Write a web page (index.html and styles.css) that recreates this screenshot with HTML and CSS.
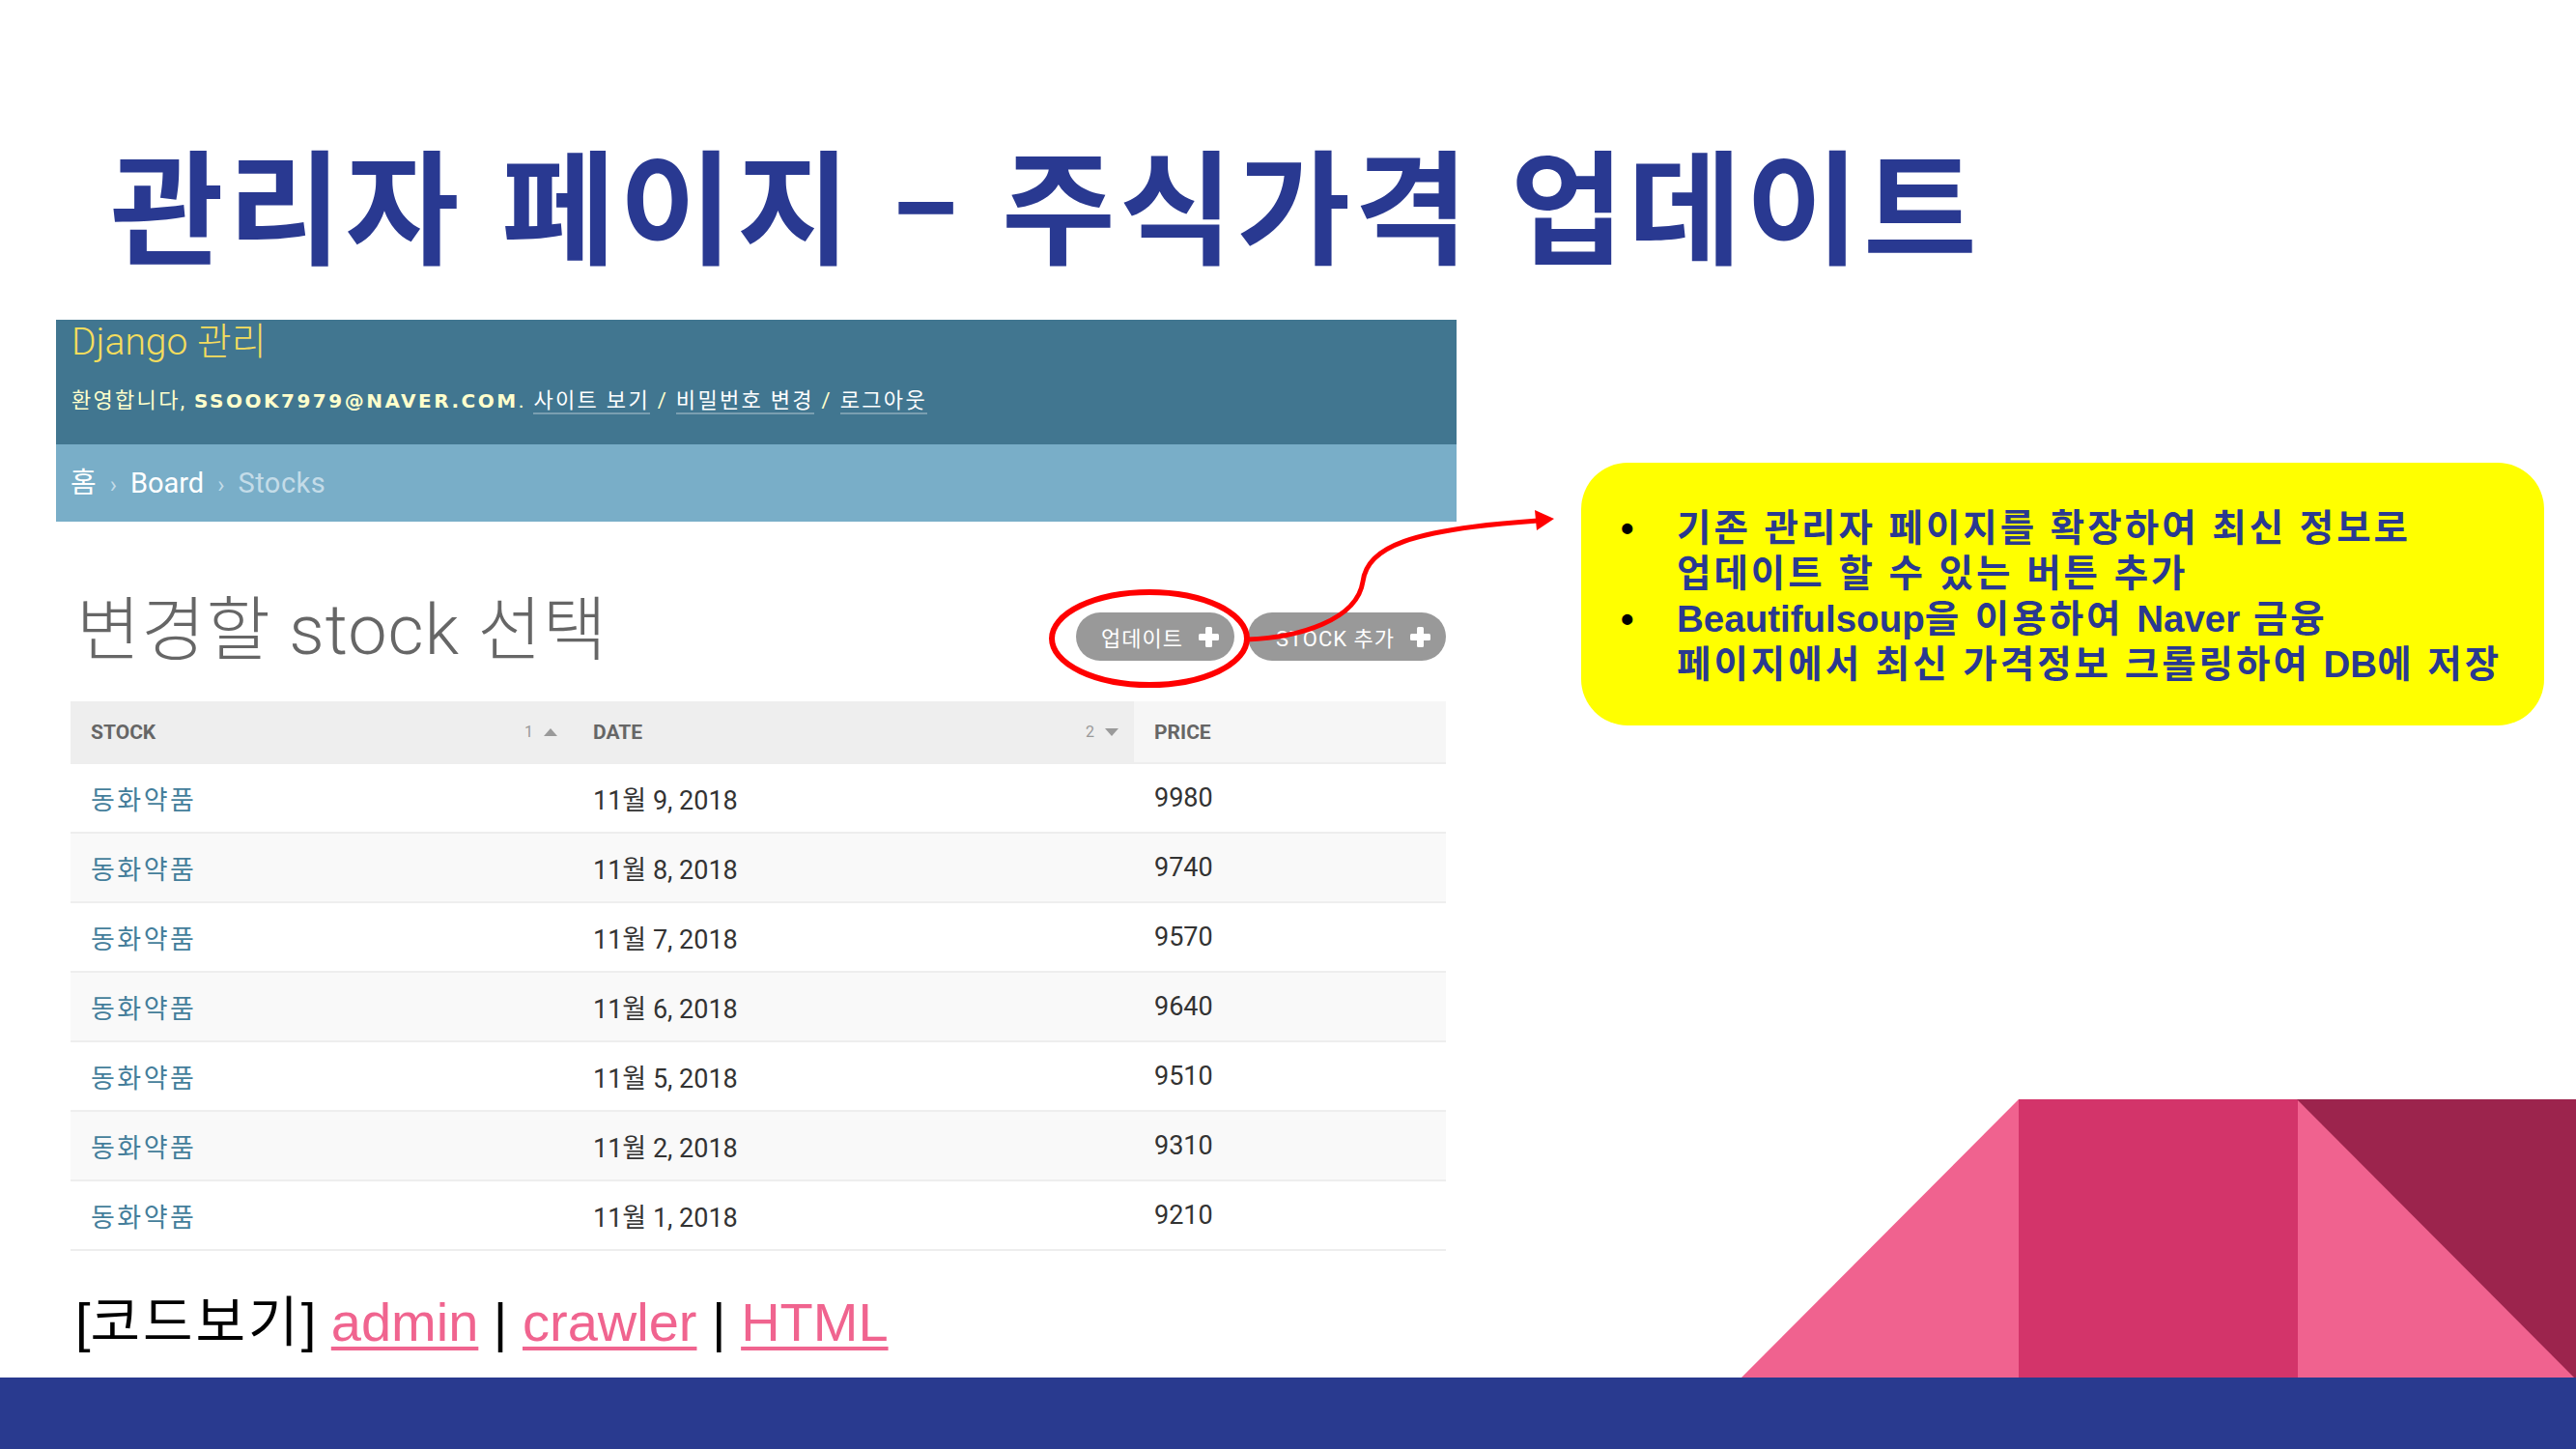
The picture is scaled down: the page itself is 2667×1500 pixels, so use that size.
FILE: index.html
```html
<!DOCTYPE html>
<html lang="ko">
<head>
<meta charset="utf-8">
<title>관리자 페이지 – 주식가격 업데이트</title>
<link rel="stylesheet" href="styles.css">
</head>
<body>
<div class="slide">
  <h1 class="slide-title">관리자 페이지 – 주식가격 업데이트</h1>

  <div class="main-row">
    <div class="admin">
      <div class="admin-header">
        <div class="site-name">Django 관리</div>
        <div class="user-tools">환영합니다, <strong>ssook7979@naver.com</strong>. <a href="#">사이트 보기</a> / <a href="#">비밀번호 변경</a> / <a href="#">로그아웃</a></div>
      </div>
      <div class="breadcrumbs"><a href="#">홈</a><span class="sep">›</span><a href="#">Board</a><span class="sep">›</span><span class="current">Stocks</span></div>
      <div class="content">
        <div class="content-head">
          <h2 class="page-heading">변경할 stock 선택</h2>
          <div class="object-tools">
            <a class="tool-btn tool-btn-first" href="#">업데이트 <svg class="plus" viewBox="0 0 21 21"><rect x="7" y="0" width="7" height="21" rx="1.5"/><rect x="0" y="7" width="21" height="7" rx="1.5"/></svg></a>
            <a class="tool-btn tool-btn-second" href="#">Stock 추가 <svg class="plus" viewBox="0 0 21 21"><rect x="7" y="0" width="7" height="21" rx="1.5"/><rect x="0" y="7" width="21" height="7" rx="1.5"/></svg></a>
          </div>
        </div>
        <table class="result-list">
          <thead>
            <tr>
              <th class="col-stock sorted"><div class="th-inner"><span>Stock</span><span class="sort"><span class="sort-num">1</span><span class="tri-up"></span></span></div></th>
              <th class="col-date sorted"><div class="th-inner"><span>Date</span><span class="sort"><span class="sort-num">2</span><span class="tri-down"></span></span></div></th>
              <th class="col-price"><div class="th-inner"><span>Price</span></div></th>
            </tr>
          </thead>
          <tbody>
            <tr><td><a href="#">동화약품</a></td><td>11월 9, 2018</td><td>9980</td></tr>
            <tr><td><a href="#">동화약품</a></td><td>11월 8, 2018</td><td>9740</td></tr>
            <tr><td><a href="#">동화약품</a></td><td>11월 7, 2018</td><td>9570</td></tr>
            <tr><td><a href="#">동화약품</a></td><td>11월 6, 2018</td><td>9640</td></tr>
            <tr><td><a href="#">동화약품</a></td><td>11월 5, 2018</td><td>9510</td></tr>
            <tr><td><a href="#">동화약품</a></td><td>11월 2, 2018</td><td>9310</td></tr>
            <tr><td><a href="#">동화약품</a></td><td>11월 1, 2018</td><td>9210</td></tr>
          </tbody>
        </table>
      </div>
    </div>

    <div class="callout">
      <ul class="callout-list">
        <li><span class="bullet">•</span><span class="callout-text">기존 관리자 페이지를 확장하여 최신 정보로<br>업데이트 할 수 있는 버튼 추가</span></li>
        <li><span class="bullet">•</span><span class="callout-text"><span class="latin">Beautifulsoup</span>을 이용하여 <span class="latin">Naver</span> 금융<br>페이지에서 최신 가격정보 크롤링하여 <span class="latin">DB</span>에 저장</span></li>
      </ul>
    </div>
  </div>

  <p class="code-links">[<span class="ko">코드보기</span>] <a href="#">admin</a> | <a href="#">crawler</a> | <a href="#">HTML</a></p>

  <div class="footer-bar"></div>

  <svg class="decor" viewBox="0 0 864 288" width="864" height="288">
    <polygon points="287,0 0,288 288,288" fill="#f0628f"/>
    <rect x="287" y="0" width="290" height="288" fill="#d3346a"/>
    <polygon points="576,0 863,288 576,288" fill="#f0628f"/>
    <polygon points="575,0 864,0 864,288 862,288" fill="#9c244d"/>
  </svg>

  <svg class="annotation" viewBox="0 0 2667 1500" width="2667" height="1500">
    <ellipse cx="1190" cy="661" rx="101" ry="48" fill="none" stroke="#ff0000" stroke-width="6"/>
    <path d="M1291,662 C1345,660 1405,642 1411,602 C1416,566 1460,548 1592,539" fill="none" stroke="#ff0000" stroke-width="5"/>
    <polygon points="1609,537 1589,528 1591,549" fill="#ff0000"/>
  </svg>
</div>
</body>
</html>
```

FILE: styles.css
```css
html, body {
  margin: 0;
  padding: 0;
  background: #ffffff;
}

.slide {
  position: relative;
  width: 2667px;
  height: 1500px;
  overflow: hidden;
  background: #ffffff;
  display: flex;
  flex-direction: column;
}

.slide-title {
  margin: 0;
  padding: 145px 0 0 114px;
  height: 331px;
  flex: none;
  box-sizing: border-box;
  font-family: "Noto Sans CJK KR", sans-serif;
  font-weight: 700;
  font-size: 128px;
  line-height: 128px;
  letter-spacing: 4px;
  color: #293991;
  white-space: nowrap;
}

.main-row {
  display: flex;
  align-items: flex-start;
  padding-left: 58px;
}

/* Django admin panel */
.admin {
  width: 1450px;
  flex: none;
  font-family: Roboto, "Noto Sans CJK KR", sans-serif;
}

.admin-header {
  background: #417690;
  height: 129px;
  box-sizing: border-box;
  padding: 0 0 0 16px;
}

.site-name {
  font-weight: 300;
  font-size: 39px;
  line-height: 46px;
  color: #f5dd5d;
  height: 46px;
  margin-bottom: 23px;
}

.user-tools {
  font-size: 22px;
  line-height: 30px;
  letter-spacing: 2.3px;
  color: #ffffcc;
  white-space: nowrap;
}

.user-tools strong {
  font-family: "DejaVu Sans", sans-serif;
  font-weight: 700;
  font-size: 20px;
  text-transform: uppercase;
  letter-spacing: 2.5px;
}

.user-tools a {
  color: #ffffff;
  text-decoration: none;
  border-bottom: 2px solid rgba(255, 255, 255, 0.3);
}

.breadcrumbs {
  background: #79aec8;
  height: 80px;
  line-height: 80px;
  padding-left: 15px;
  font-size: 29px;
  color: #c4dce8;
  white-space: nowrap;
}

.breadcrumbs a {
  color: #ffffff;
  text-decoration: none;
}

.breadcrumbs .sep {
  display: inline-block;
  margin: 0 14px;
  font-size: 24px;
  color: #c4dce8;
}

.current {
  letter-spacing: 0.5px;
}

.content {
  padding: 72px 11px 0 15px;
}

.content-head {
  display: flex;
  justify-content: space-between;
  align-items: flex-start;
  height: 114px;
}

.page-heading {
  margin: 0 0 0 6px;
  font-family: Roboto, "Noto Sans CJK KR", sans-serif;
  font-weight: 300;
  font-size: 72px;
  line-height: 82px;
  letter-spacing: 1px;
  color: #666666;
  white-space: nowrap;
}

.object-tools {
  display: flex;
  gap: 14px;
  margin-top: 22px;
}

.tool-btn {
  display: flex;
  align-items: center;
  gap: 16px;
  height: 50px;
  padding: 0 16px 0 24px;
  border-radius: 25px;
  background: #999999;
  color: #ffffff;
  text-decoration: none;
  font-size: 22px;
  letter-spacing: 1px;
  text-transform: uppercase;
  white-space: nowrap;
}

.tool-btn-first {
  padding-left: 26px;
}

.tool-btn-second {
  padding-left: 29px;
}

.plus {
  width: 21px;
  height: 21px;
  fill: #ffffff;
}

/* result table */
.result-list {
  width: 1424px;
  border-collapse: collapse;
  table-layout: fixed;
}

.result-list th {
  height: 63px;
  padding: 0 16px 0 21px;
  background: #f6f6f6;
  border-bottom: 2px solid #eeeeee;
  text-align: left;
  vertical-align: middle;
  font-size: 21px;
  font-weight: 700;
  color: #666666;
  text-transform: uppercase;
}

.result-list th.sorted {
  background: #eeeeee;
}

.col-stock { width: 483px; }
.col-date { width: 544px; }
.col-price { width: 286px; }

.th-inner {
  display: flex;
  justify-content: space-between;
  align-items: center;
}

.sort {
  display: flex;
  align-items: center;
  gap: 11px;
  font-weight: 400;
  font-size: 16px;
  color: #999999;
}

.tri-up, .tri-down {
  width: 0;
  height: 0;
  border-left: 7.5px solid transparent;
  border-right: 7.5px solid transparent;
}

.tri-up {
  border-bottom: 8px solid #9a9a9a;
}

.tri-down {
  border-top: 8px solid #9a9a9a;
}

.result-list td {
  height: 70px;
  padding: 0 0 0 21px;
  border-bottom: 2px solid #eeeeee;
  vertical-align: middle;
  font-size: 27px;
  color: #333333;
  white-space: nowrap;
}

.result-list tbody tr:nth-child(even) td {
  background: #f9f9f9;
}

.result-list td a {
  color: #447e9b;
  text-decoration: none;
  letter-spacing: 2.5px;
}

/* yellow callout */
.callout {
  margin: 148px 0 0 129px;
  width: 997px;
  flex: none;
  box-sizing: border-box;
  padding: 44px 0 40px 41px;
  background: #ffff00;
  border-radius: 48px;
}

.callout-list {
  list-style: none;
  margin: 0;
  padding: 0;
  font-family: "Liberation Sans", "Noto Sans CJK KR", sans-serif;
  font-weight: 700;
  font-size: 38.5px;
  line-height: 47px;
}

.callout-list li {
  display: flex;
}

.bullet {
  width: 58px;
  color: #000000;
  flex: none;
}

.callout-text {
  color: #2a3990;
  white-space: nowrap;
  letter-spacing: 3px;
}

.callout-text .latin {
  letter-spacing: 0;
}

/* code links */
.code-links {
  margin: 43px 0 0 78px;
  font-family: "Liberation Sans", "Noto Sans CJK KR", sans-serif;
  font-size: 56px;
  line-height: 62px;
  color: #000000;
  white-space: nowrap;
}

.code-links .ko {
  letter-spacing: 3px;
}

.code-links a {
  color: #f0648f;
  text-decoration: underline;
  text-decoration-thickness: 4px;
  text-underline-offset: 6px;
}

.footer-bar {
  margin-top: auto;
  height: 74px;
  flex: none;
  background: #293a8f;
}

.decor {
  position: absolute;
  left: 1803px;
  top: 1138px;
}

.annotation {
  position: absolute;
  left: 0;
  top: 0;
  pointer-events: none;
}
```
